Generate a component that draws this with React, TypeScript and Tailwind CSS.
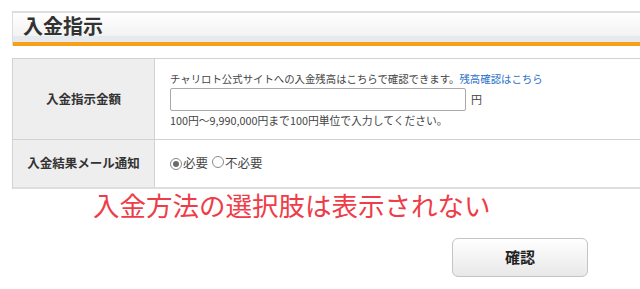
import React from 'react';

const jp = { fontFamily: '"Noto Sans CJK JP", "Noto Sans", sans-serif' };

function Radio({ checked }: { checked?: boolean }) {
  return (
    <span className="inline-flex h-[12px] w-[12px] items-center justify-center rounded-full border border-[#8a8a8a] bg-white">
      {checked && <span className="h-[6px] w-[6px] rounded-full bg-[#6b6b6b]" />}
    </span>
  );
}

export default function App() {
  return (
    <div className="h-[289px] w-[640px] overflow-hidden bg-white text-[#333]" style={jp}>
      <div className="pl-[12px] pt-[11px]">
        {/* section heading */}
        <div className="w-[640px] border-t-2 border-l border-[#dddddd]">
          <div className="flex h-[23px] items-center bg-gradient-to-b from-white to-[#f3f3f3] pl-[10px] pt-[2px]">
            <span className="text-[20px] font-bold leading-[22px] text-[#333]">入金指示</span>
          </div>
          <div className="h-[6px] bg-[#e4eaee]" />
          <div className="h-[4px] bg-[#f8a01c]" />
        </div>

        {/* form table */}
        <div className="mt-[12px] w-[640px] border-t border-l border-[#d2d2d2] text-[11px]">
          <div className="flex h-[81px] border-b border-[#d2d2d2]">
            <div className="flex w-[142px] shrink-0 items-center justify-center border-r border-[#d2d2d2] bg-[#eeeeee] text-[12.5px] font-bold">
              入金指示金額
            </div>
            <div className="flex flex-col justify-center pl-[15px] text-[#444]">
              <div className="text-[10.4px] leading-[16px]">
                チャリロト公式サイトへの入金残高はこちらで確認できます。
                <span className="text-[#2a6fc9]">残高確認はこちら</span>
              </div>
              <div className="mt-[1px] flex items-center gap-[5px]">
                <div className="h-[23px] w-[296px] rounded-[2px] border border-[#a9a9a9] bg-white" />
                <span>円</span>
              </div>
              <div className="mt-[1px] text-[10.8px] leading-[16px]">100円～9,990,000円まで100円単位で入力してください。</div>
            </div>
          </div>
          <div className="flex h-[49px] border-b-2 border-[#dedede]">
            <div className="flex w-[142px] shrink-0 items-center justify-center border-r border-[#d2d2d2] bg-[#eeeeee] text-[12.5px] font-bold">
              入金結果メール通知
            </div>
            <div className="flex items-center pl-[15px] text-[12.5px] text-[#444]">
              <Radio checked />
              <span className="ml-[1px]">必要</span>
              <span className="ml-[4px]"><Radio /></span>
              <span className="ml-[1px]">不必要</span>
            </div>
          </div>
        </div>
      </div>

      <div className="ml-[93px] -mt-[2px] text-[26.5px] leading-[36px] text-[#ee3d48]">
        入金方法の選択肢は表示されない
      </div>

      <div className="ml-[452px] mt-[15px] flex h-[39px] w-[136px] items-center justify-center rounded-[6px] border border-[#c4c4c4] bg-gradient-to-b from-white to-[#e8e8e8] text-[15px] font-bold text-[#222]">
        確認
      </div>
    </div>
  );
}
